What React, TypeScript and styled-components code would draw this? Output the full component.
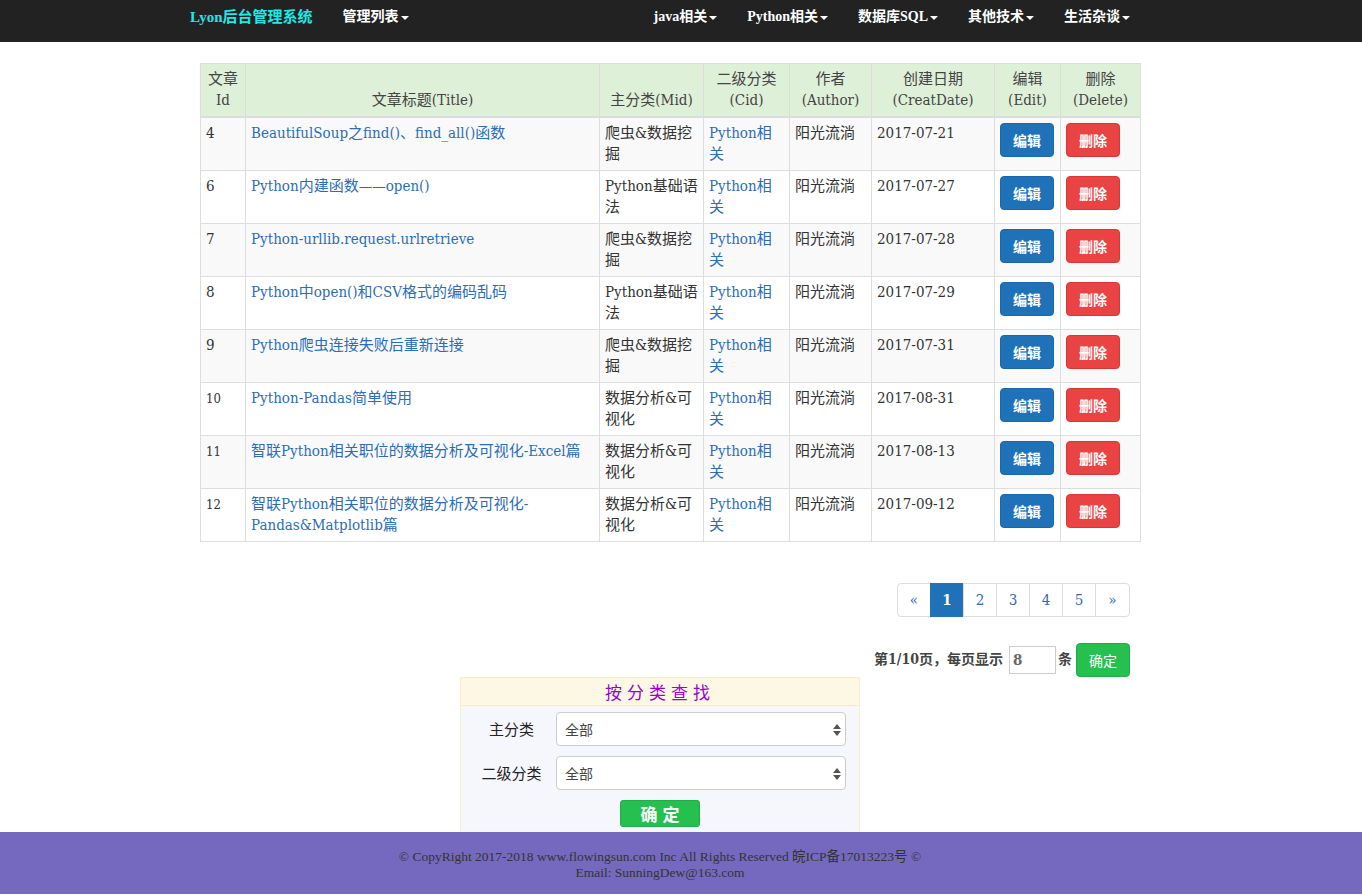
import React from "react";
import styled, { createGlobalStyle } from "styled-components";

const Global = createGlobalStyle`
  html, body { margin: 0; padding: 0; }
  body {
    font-family: "DejaVu Serif Condensed", "DejaVu Serif", "Noto Sans CJK SC", serif;
    font-stretch: condensed;
    font-size: 15px;
    line-height: 1.42857;
    color: #333;
    background: #fff;
  }
  * { box-sizing: border-box; }
`;

const Navbar = styled.nav`
  height: 42px;
  background: #222;
  display: flex;
  align-items: flex-start;
  padding: 0 0 0 175px;
  font-family: "Liberation Serif", "Noto Sans CJK SC", serif;
  font-stretch: normal;
`;

const Brand = styled.a`
  display: block;
  padding: 7px 15px;
  font-size: 15px;
  font-weight: bold;
  line-height: 20px;
  color: #1de9e6;
  text-decoration: none;
`;

const NavList = styled.ul<{ $right?: boolean }>`
  list-style: none;
  margin: 0;
  padding: 0;
  display: flex;
  margin-left: ${(p) => (p.$right ? "auto" : "0")};
  margin-right: ${(p) => (p.$right ? "217px" : "0")};
`;

const NavItem = styled.li`
  padding: 7px 15px;
  font-size: 14px;
  line-height: 20px;
  font-weight: bold;
  color: #fff;
  white-space: nowrap;
`;

const Caret = styled.span`
  display: inline-block;
  width: 0;
  height: 0;
  margin-left: 2px;
  vertical-align: middle;
  border-top: 4px solid #fff;
  border-left: 4px solid transparent;
  border-right: 4px solid transparent;
`;

const Main = styled.main`
  width: 940px;
  margin: 21px 0 0 200px;
`;

const Table = styled.table`
  width: 940px;
  border-collapse: collapse;
  table-layout: fixed;
  border: 1px solid #ddd;
`;

const Th = styled.th`
  background: #dff0d8;
  color: #444;
  font-weight: normal;
  text-align: center;
  vertical-align: bottom;
  padding: 5px;
  line-height: 21px;
  border: 1px solid #ddd;
  border-bottom: 2px solid #ddd;
`;

const Tr = styled.tr<{ $odd: boolean }>`
  background: ${(p) => (p.$odd ? "#f9f9f9" : "#fff")};
`;

const Td = styled.td<{ $narrow?: boolean; $small?: boolean }>`
  padding: ${(p) => (p.$narrow ? "5px 8px 5px 5px" : "5px")};
  vertical-align: top;
  line-height: 21px;
  border: 1px solid #ddd;
  font-size: ${(p) => (p.$small ? "13px" : "15px")};
  word-break: break-all;
`;

const Link = styled.a`
  color: #2b6db5;
  text-decoration: none;
  word-break: normal;
`;

const Btn = styled.button<{ $kind: "edit" | "del" | "ok" }>`
  display: inline-block;
  height: 34px;
  padding: 6px 12px;
  font-family: "Noto Sans CJK SC", sans-serif;
  font-size: 14px;
  font-weight: bold;
  line-height: 20px;
  color: #fff;
  border-radius: 4px;
  cursor: pointer;
  background: ${(p) =>
    p.$kind === "edit" ? "#1f72b8" : p.$kind === "del" ? "#e94343" : "#25c04f"};
  border: 1px solid
    ${(p) =>
      p.$kind === "edit" ? "#1c67a8" : p.$kind === "del" ? "#d93636" : "#20ad46"};
`;

const PagerRow = styled.div`
  display: flex;
  justify-content: flex-end;
  padding-right: 10px;
  margin-top: 41px;
`;

const Pager = styled.ul`
  list-style: none;
  margin: 0;
  padding: 0;
  display: flex;
`;

const PageItem = styled.li<{ $active?: boolean }>`
  min-width: 34px;
  height: 34px;
  padding: 6px 0;
  text-align: center;
  font-size: 15px;
  line-height: 20px;
  margin-left: -1px;
  border: 1px solid ${(p) => (p.$active ? "#1f72b8" : "#ddd")};
  background: ${(p) => (p.$active ? "#1f72b8" : "#fff")};
  color: ${(p) => (p.$active ? "#fff" : "#2b6db5")};
  font-weight: ${(p) => (p.$active ? "bold" : "normal")};
  &:first-child { border-radius: 4px 0 0 4px; margin-left: 0; }
  &:last-child { border-radius: 0 4px 4px 0; min-width: 35px; }
`;

const InfoRow = styled.div`
  display: flex;
  justify-content: flex-end;
  align-items: center;
  gap: 2px;
  padding-right: 10px;
  margin-top: 26px;
  font-size: 14px;
  font-weight: bold;
  color: #444;
`;

const SizeInput = styled.input`
  width: 47px;
  height: 28px;
  margin-left: 4px;
  border: 1px solid #ccc;
  padding: 0 3px;
  font-family: "DejaVu Serif Condensed", "DejaVu Serif", serif;
  font-size: 15px;
  font-weight: bold;
  color: #666;
`;

const InfoBtn = styled(Btn)`
  margin-left: 2px;
  font-weight: normal;
  font-size: 14px;
`;

const PanelWrap = styled.div`
  display: flex;
  justify-content: center;
  padding-right: 20px;
  width: 940px;
`;

const Panel = styled.section`
  width: 400px;
  border: 1px solid #faebcc;
  border-bottom: none;
  background: #f6f7fd;
`;

const PanelHead = styled.h3`
  margin: 0;
  height: 28px;
  background: #fcf8e3;
  border-bottom: 1px solid #faebcc;
  text-align: center;
  font-family: "Noto Sans CJK SC", sans-serif;
  font-weight: normal;
  font-size: 17px;
  line-height: 27px;
  letter-spacing: 5px;
  color: #9a00d0;
`;

const PanelBody = styled.div`
  padding: 6px 13px 5px 6px;
  display: grid;
  grid-template-columns: 89px 290px;
  row-gap: 10px;
  align-items: center;
`;

const Label = styled.label`
  text-align: center;
  font-family: "Noto Sans CJK SC", sans-serif;
  font-size: 15px;
  color: #222;
`;

const SelectBox = styled.div`
  position: relative;
  height: 34px;
  border: 1px solid #ccc;
  border-radius: 4px;
  background: #fff;
  padding: 0 8px;
  font-family: "Noto Sans CJK SC", sans-serif;
  font-size: 14px;
  line-height: 32px;
  color: #444;
`;

const Arrows = styled.svg`
  position: absolute;
  right: 3px;
  top: 10px;
`;

const SearchBtn = styled.button`
  grid-column: 1 / span 2;
  justify-self: center;
  margin-left: 7px;
  width: 80px;
  height: 27px;
  border: 1px solid #20ad46;
  border-radius: 3px;
  background: #25c04f;
  color: #fff;
  font-family: "Noto Sans CJK SC", sans-serif;
  font-size: 17px;
  font-weight: bold;
  line-height: 24px;
  letter-spacing: 5px;
  padding: 0 0 0 5px;
`;

const Footer = styled.footer`
  height: 62px;
  background: #7569bf;
  padding: 17px 42px 0 0;
  text-align: center;
  font-family: "Liberation Serif", "Noto Sans CJK SC", serif;
  font-stretch: normal;
  font-size: 13.5px;
  line-height: 16px;
  color: #333;
`;

type Row = { id: number; title: string; mid: string; date: string };

const rows: Row[] = [
  { id: 4, title: "BeautifulSoup之find()、find_all()函数", mid: "爬虫&数据挖掘", date: "2017-07-21" },
  { id: 6, title: "Python内建函数——open()", mid: "Python基础语法", date: "2017-07-27" },
  { id: 7, title: "Python-urllib.request.urlretrieve", mid: "爬虫&数据挖掘", date: "2017-07-28" },
  { id: 8, title: "Python中open()和CSV格式的编码乱码", mid: "Python基础语法", date: "2017-07-29" },
  { id: 9, title: "Python爬虫连接失败后重新连接", mid: "爬虫&数据挖掘", date: "2017-07-31" },
  { id: 10, title: "Python-Pandas简单使用", mid: "数据分析&可视化", date: "2017-08-31" },
  { id: 11, title: "智联Python相关职位的数据分析及可视化-Excel篇", mid: "数据分析&可视化", date: "2017-08-13" },
  { id: 12, title: "智联Python相关职位的数据分析及可视化-Pandas&Matplotlib篇", mid: "数据分析&可视化", date: "2017-09-12" },
];

const widths = [45, 354, 104, 86, 82, 123, 66, 80];

const SelectArrows = () => (
  <Arrows width="10" height="14" viewBox="0 0 10 14">
    <path d="M5 1 L9 6 L1 6 Z" fill="#555" />
    <path d="M5 13 L9 8 L1 8 Z" fill="#555" />
  </Arrows>
);

export default function App() {
  return (
    <>
      <Global />
      <Navbar>
        <Brand>Lyon后台管理系统</Brand>
        <NavList>
          <NavItem>
            管理列表<Caret />
          </NavItem>
        </NavList>
        <NavList $right>
          {["java相关", "Python相关", "数据库SQL", "其他技术", "生活杂谈"].map((t) => (
            <NavItem key={t}>
              {t}
              <Caret />
            </NavItem>
          ))}
        </NavList>
      </Navbar>
      <Main>
        <Table>
          <colgroup>
            {widths.map((w, i) => (
              <col key={i} style={{ width: w }} />
            ))}
          </colgroup>
          <thead>
            <tr>
              <Th>文章<br />Id</Th>
              <Th>文章标题(Title)</Th>
              <Th>主分类(Mid)</Th>
              <Th>二级分类<br />(Cid)</Th>
              <Th>作者<br />(Author)</Th>
              <Th>创建日期<br />(CreatDate)</Th>
              <Th>编辑<br />(Edit)</Th>
              <Th>删除<br />(Delete)</Th>
            </tr>
          </thead>
          <tbody>
            {rows.map((r, i) => (
              <Tr key={r.id} $odd={i % 2 === 0}>
                <Td $small={r.id >= 10}>{r.id}</Td>
                <Td>
                  <Link>{r.title}</Link>
                </Td>
                <Td>{r.mid}</Td>
                <Td $narrow>
                  <Link style={{ wordBreak: "break-all" }}>Python相关</Link>
                </Td>
                <Td>阳光流淌</Td>
                <Td>{r.date}</Td>
                <Td>
                  <Btn $kind="edit">编辑</Btn>
                </Td>
                <Td>
                  <Btn $kind="del">删除</Btn>
                </Td>
              </Tr>
            ))}
          </tbody>
        </Table>
        <PagerRow>
          <Pager>
            <PageItem>«</PageItem>
            <PageItem $active>1</PageItem>
            <PageItem>2</PageItem>
            <PageItem>3</PageItem>
            <PageItem>4</PageItem>
            <PageItem>5</PageItem>
            <PageItem>»</PageItem>
          </Pager>
        </PagerRow>
        <InfoRow>
          <span>第1/10页，每页显示</span>
          <SizeInput defaultValue="8" />
          <span>条</span>
          <InfoBtn $kind="ok">确定</InfoBtn>
        </InfoRow>
        <PanelWrap>
          <Panel>
            <PanelHead>按分类查找</PanelHead>
            <PanelBody>
              <Label>主分类</Label>
              <SelectBox>
                全部
                <SelectArrows />
              </SelectBox>
              <Label>二级分类</Label>
              <SelectBox>
                全部
                <SelectArrows />
              </SelectBox>
              <SearchBtn>确定</SearchBtn>
            </PanelBody>
          </Panel>
        </PanelWrap>
      </Main>
      <Footer>
        © CopyRight 2017-2018 www.flowingsun.com Inc All Rights Reserved 皖ICP备17013223号 ©
        <br />
        Email: SunningDew@163.com
      </Footer>
    </>
  );
}
